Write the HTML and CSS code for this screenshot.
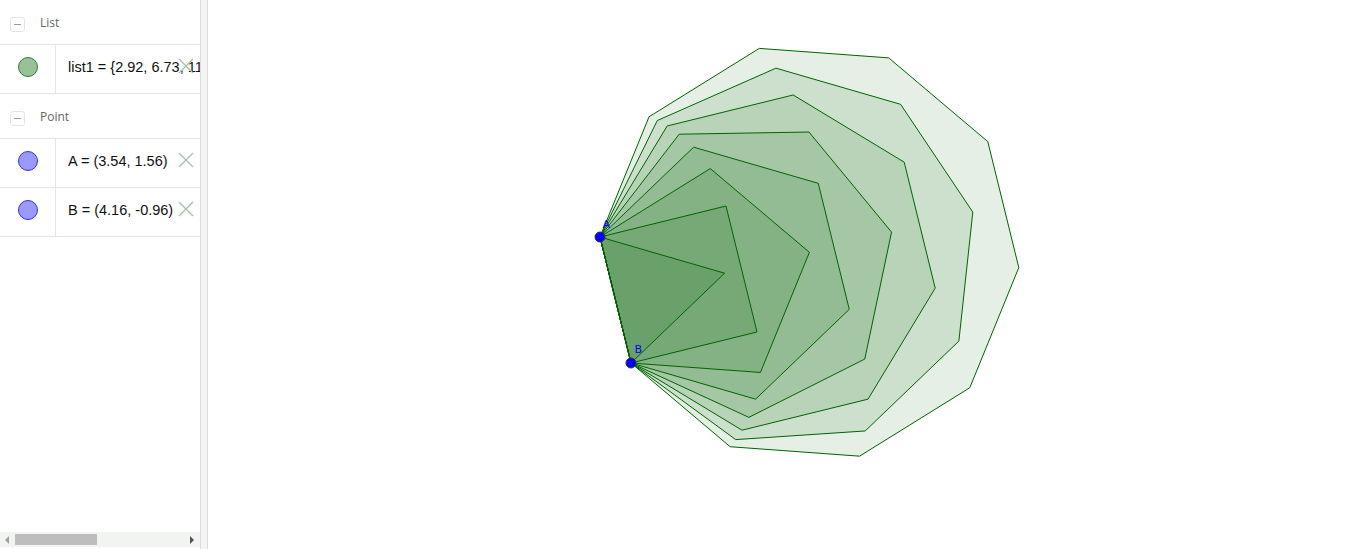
FILE: index.html
```html
<!DOCTYPE html>
<html>
<head>
<meta charset="utf-8">
<link rel="stylesheet" href="styles.css">
</head>
<body>
<div class="app">
  <div class="algebra">
    <div class="items">
      <div class="group">
        <span class="toggle"><span class="minus"></span></span>
        <span class="group-name">List</span>
      </div>
      <div class="item">
        <div class="marble-cell"><span class="marble marble-green"></span></div>
        <div class="formula">list1 = {2.92, 6.73, 11.</div>
        <svg class="del" width="16" height="16" viewBox="0 0 16 16"><path d="M1 1L15 15M15 1L1 15" /></svg>
      </div>
      <div class="group">
        <span class="toggle"><span class="minus"></span></span>
        <span class="group-name">Point</span>
      </div>
      <div class="item">
        <div class="marble-cell"><span class="marble marble-blue"></span></div>
        <div class="formula">A = (3.54, 1.56)</div>
        <svg class="del" width="16" height="16" viewBox="0 0 16 16"><path d="M1 1L15 15M15 1L1 15" /></svg>
      </div>
      <div class="item">
        <div class="marble-cell"><span class="marble marble-blue"></span></div>
        <div class="formula">B = (4.16, -0.96)</div>
        <svg class="del" width="16" height="16" viewBox="0 0 16 16"><path d="M1 1L15 15M15 1L1 15" /></svg>
      </div>
    </div>
    <div class="hscroll">
      <span class="arrow arrow-left"></span>
      <span class="thumb"></span>
      <span class="track-rest"></span>
      <span class="arrow arrow-right"></span>
    </div>
  </div>
  <div class="splitter"></div>
  <div class="graphics">
    <svg class="canvas" width="1139" height="549" viewBox="208 0 1139 549">
      <g class="polys">
        <polygon points="600,237 631,363 730.14,446.72 859.55,456.18 969.81,387.76 1018.8,267.6 987.8,141.6 888.68,57.86 759.27,48.4 649.01,116.82"/>
        <polygon points="600,237 631,363 735.74,439.6 865.21,430.96 958.85,341.13 972.82,212.12 900.6,104.32 775.98,68.16 657.27,120.56"/>
        <polygon points="600,237 631,363 742.02,430.18 868.02,399.18 935.2,288.16 904.2,162.16 793.18,94.98 667.18,125.98"/>
        <polygon points="600,237 631,363 748.84,417.33 864.79,359.07 891.54,232.1 808.94,132.02 679.2,134.2"/>
        <polygon points="600,237 631,363 755.62,399.16 849.26,309.33 818.26,183.33 693.64,147.17"/>
        <polygon points="600,237 631,363 760.41,372.46 809.4,252.3 710.28,168.56"/>
        <polygon points="600,237 631,363 757,332 726,206"/>
        <polygon points="600,237 631,363 724.6,273.2"/>
      </g>
      <circle class="pt" cx="600" cy="237" r="5"/>
      <circle class="pt" cx="631" cy="363" r="5"/>
      <text class="lbl" x="602.5" y="228">A</text>
      <text class="lbl" x="634.5" y="353">B</text>
    </svg>
  </div>
</div>
</body>
</html>
```
FILE: styles.css
```css
html, body {
  margin: 0;
  padding: 0;
  background: #ffffff;
  overflow: hidden;
}
.app {
  display: flex;
  width: 1347px;
  height: 549px;
}
.algebra {
  width: 200px;
  height: 549px;
  display: flex;
  flex-direction: column;
  background: #ffffff;
}
.items {
  flex: 1;
  overflow: hidden;
}
.group {
  height: 45px;
  box-sizing: border-box;
  border-bottom: 1px solid #dfe9df;
  display: flex;
  align-items: center;
  padding-top: 4px;
}
.toggle {
  width: 15px;
  height: 15px;
  margin-left: 10px;
  border: 1px solid #e4e4e4;
  border-radius: 3px;
  display: flex;
  align-items: center;
  justify-content: center;
  box-sizing: border-box;
}
.minus {
  width: 7px;
  height: 1px;
  background: #9a9a9a;
}
.group-name {
  margin-left: 15px;
  font-family: "Open Sans", sans-serif;
  font-size: 12px;
  color: #666666;
  margin-top: -3px;
}
.item {
  height: 49px;
  box-sizing: border-box;
  border-bottom: 1px solid #dfe9df;
  display: flex;
  align-items: stretch;
  position: relative;
}
.marble-cell {
  width: 56px;
  border-right: 1px solid #dfe9df;
  display: flex;
  align-items: center;
  justify-content: center;
  box-sizing: border-box;
  padding-bottom: 4px;
}
.marble {
  width: 20px;
  height: 20px;
  border-radius: 50%;
  box-sizing: border-box;
  display: block;
}
.marble-green {
  background: #99c199;
  border: 1px solid #2e7d2e;
}
.marble-blue {
  background: #9999ff;
  border: 1px solid #3333dd;
}
.formula {
  margin-left: 12px;
  font-family: "Liberation Sans", sans-serif;
  font-size: 14.5px;
  color: #111111;
  white-space: nowrap;
  overflow: hidden;
  flex: 1;
  display: flex;
  align-items: center;
  padding-bottom: 4px;
}
.del {
  position: absolute;
  right: 6px;
  top: 13px;
}
.del path {
  stroke: #a9bea9;
  stroke-width: 1.3;
  fill: none;
}
.hscroll {
  height: 15px;
  margin-bottom: 2px;
  display: flex;
  align-items: center;
  background: #f1f4f1;
}
.arrow {
  width: 0;
  height: 0;
  border-top: 4px solid transparent;
  border-bottom: 4px solid transparent;
}
.arrow-left {
  border-right: 4px solid #a0a0a0;
  margin-left: 5px;
  margin-right: 6px;
}
.arrow-right {
  border-left: 4px solid #505050;
  margin-right: 6px;
}
.thumb {
  width: 82px;
  height: 11px;
  background: #bdbdbd;
}
.track-rest {
  flex: 1;
}
.splitter {
  width: 8px;
  height: 549px;
  box-sizing: border-box;
  background: #f3f3f3;
  border-left: 1px solid #dcdcdc;
  border-right: 1px solid #dcdcdc;
}
.graphics {
  flex: 1;
  height: 549px;
  background: #ffffff;
}
.canvas {
  display: block;
}
.polys polygon {
  fill: rgba(0, 100, 0, 0.1);
  stroke: #006400;
  stroke-width: 1;
  stroke-linejoin: miter;
}
.pt {
  fill: #0000ff;
  stroke: #333333;
  stroke-width: 1;
}
.lbl {
  fill: #0000ff;
  font-family: "DejaVu Sans", sans-serif;
  font-size: 11px;
}
```
